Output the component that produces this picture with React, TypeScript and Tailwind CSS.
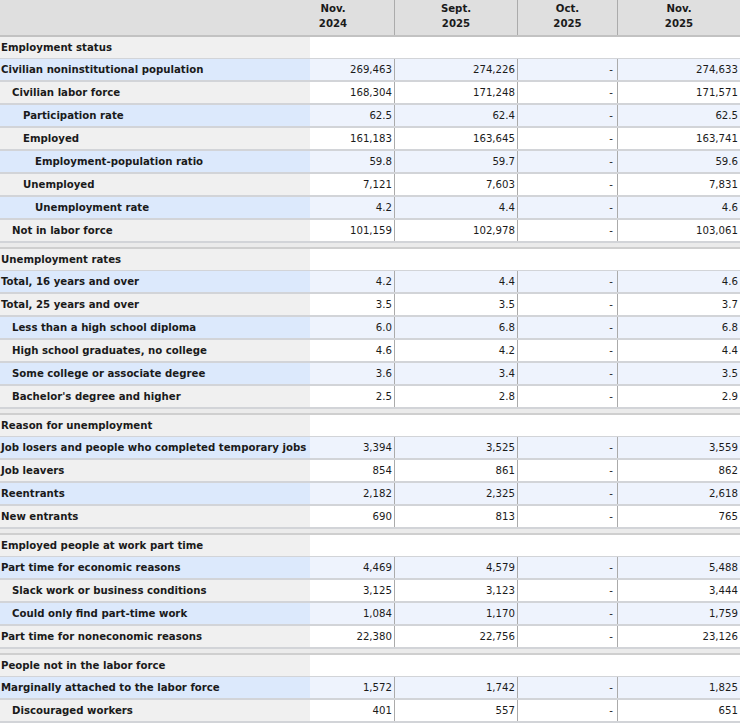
type Row = [string, number, string, string, string];

const sections: { title: string; rows: Row[] }[] = [
  {
    title: 'Employment status',
    rows: [
      ['Civilian noninstitutional population', 0, '269,463', '274,226', '274,633'],
      ['Civilian labor force', 1, '168,304', '171,248', '171,571'],
      ['Participation rate', 2, '62.5', '62.4', '62.5'],
      ['Employed', 2, '161,183', '163,645', '163,741'],
      ['Employment-population ratio', 3, '59.8', '59.7', '59.6'],
      ['Unemployed', 2, '7,121', '7,603', '7,831'],
      ['Unemployment rate', 3, '4.2', '4.4', '4.6'],
      ['Not in labor force', 1, '101,159', '102,978', '103,061'],
    ],
  },
  {
    title: 'Unemployment rates',
    rows: [
      ['Total, 16 years and over', 0, '4.2', '4.4', '4.6'],
      ['Total, 25 years and over', 0, '3.5', '3.5', '3.7'],
      ['Less than a high school diploma', 1, '6.0', '6.8', '6.8'],
      ['High school graduates, no college', 1, '4.6', '4.2', '4.4'],
      ['Some college or associate degree', 1, '3.6', '3.4', '3.5'],
      ["Bachelor's degree and higher", 1, '2.5', '2.8', '2.9'],
    ],
  },
  {
    title: 'Reason for unemployment',
    rows: [
      ['Job losers and people who completed temporary jobs', 0, '3,394', '3,525', '3,559'],
      ['Job leavers', 0, '854', '861', '862'],
      ['Reentrants', 0, '2,182', '2,325', '2,618'],
      ['New entrants', 0, '690', '813', '765'],
    ],
  },
  {
    title: 'Employed people at work part time',
    rows: [
      ['Part time for economic reasons', 0, '4,469', '4,579', '5,488'],
      ['Slack work or business conditions', 1, '3,125', '3,123', '3,444'],
      ['Could only find part-time work', 1, '1,084', '1,170', '1,759'],
      ['Part time for noneconomic reasons', 0, '22,380', '22,756', '23,126'],
    ],
  },
  {
    title: 'People not in the labor force',
    rows: [
      ['Marginally attached to the labor force', 0, '1,572', '1,742', '1,825'],
      ['Discouraged workers', 1, '401', '557', '651'],
    ],
  },
];

const indents = ['pl-[1px]', 'pl-[12px]', 'pl-[23px]', 'pl-[35px]'];
const cols = 'grid grid-cols-[310px_84px_123px_100px_123px]';

function DataRow({ row, blue }: { row: Row; blue: boolean }) {
  const [label, level, a, b, c] = row;
  const val = blue ? 'bg-[#eef3fd]' : 'bg-white';
  return (
    <div className={`${cols} h-[23px] border-b-2 border-[#d2d4d8] leading-[21px]`}>
      <div className={`${indents[level]} font-bold whitespace-nowrap ${blue ? 'bg-[#dce9fc]' : 'bg-[#f0f0f0]'}`}>{label}</div>
      <div className={`${val} text-right pr-[2px]`}>{a}</div>
      <div className={`${val} text-right pr-[2px] border-l border-[#ababab]`}>{b}</div>
      <div className={`${val} text-right pr-[4px] border-l border-[#ababab]`}>-</div>
      <div className={`${val} text-right pr-[2px] border-l border-[#ababab]`}>{c}</div>
    </div>
  );
}

export default function App() {
  return (
    <div className="w-[740px] h-[724px] overflow-hidden bg-white text-[#1a1a1a] text-[11.3px] font-['DejaVu_Sans_Condensed','DejaVu_Sans',sans-serif] [font-stretch:condensed]">
      <div className="grid grid-cols-[272px_122px_123px_100px_123px] h-[37px] bg-[#dfdfdf] border-b-2 border-[#c2c2c2] font-bold leading-[15px] text-center">
        <div />
        <div className="pt-[1px]">Nov.<br />2024</div>
        <div className="pt-[1px] border-l border-[#ababab]">Sept.<br />2025</div>
        <div className="pt-[1px] border-l border-[#ababab]">Oct.<br />2025</div>
        <div className="pt-[1px] border-l border-[#ababab]">Nov.<br />2025</div>
      </div>
      {sections.map((s, si) => (
        <div key={s.title}>
          {si > 0 && <div className="h-[6px] bg-[#ebebeb] border-b-2 border-[#cfcfcf]" />}
          <div className={`${cols} h-[22px] border-b-2 border-[#d2d4d8] leading-[20px]`}>
            <div className="pl-[1px] pt-[1px] font-bold bg-[#f0f0f0]">{s.title}</div>
            <div className="col-span-4 bg-white" />
          </div>
          {s.rows.map((r, i) => (
            <DataRow key={r[0]} row={r} blue={i % 2 === 0} />
          ))}
        </div>
      ))}
    </div>
  );
}
